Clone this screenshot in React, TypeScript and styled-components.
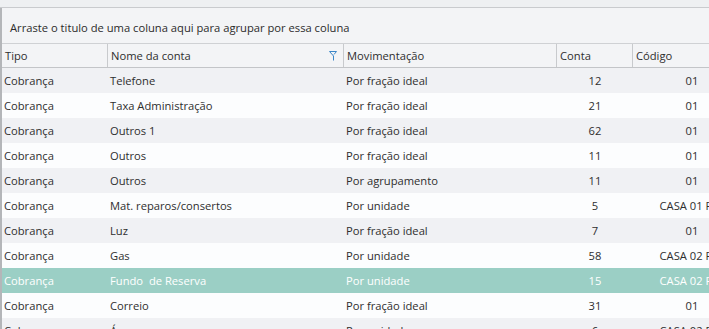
import React from 'react';
import styled, { createGlobalStyle } from 'styled-components';

type Row = {
  tipo: string;
  nome: string;
  mov: string;
  conta: string;
  codigo: string;
  selected?: boolean;
};

const rows: Row[] = [
  { tipo: 'Cobrança', nome: 'Telefone', mov: 'Por fração ideal', conta: '12', codigo: '01' },
  { tipo: 'Cobrança', nome: 'Taxa Administração', mov: 'Por fração ideal', conta: '21', codigo: '01' },
  { tipo: 'Cobrança', nome: 'Outros 1', mov: 'Por fração ideal', conta: '62', codigo: '01' },
  { tipo: 'Cobrança', nome: 'Outros', mov: 'Por fração ideal', conta: '11', codigo: '01' },
  { tipo: 'Cobrança', nome: 'Outros', mov: 'Por agrupamento', conta: '11', codigo: '01' },
  { tipo: 'Cobrança', nome: 'Mat. reparos/consertos', mov: 'Por unidade', conta: '5', codigo: 'CASA 01 FRE' },
  { tipo: 'Cobrança', nome: 'Luz', mov: 'Por fração ideal', conta: '7', codigo: '01' },
  { tipo: 'Cobrança', nome: 'Gas', mov: 'Por unidade', conta: '58', codigo: 'CASA 02 FRE' },
  { tipo: 'Cobrança', nome: 'Fundo  de Reserva', mov: 'Por unidade', conta: '15', codigo: 'CASA 02 FRE', selected: true },
  { tipo: 'Cobrança', nome: 'Correio', mov: 'Por fração ideal', conta: '31', codigo: '01' },
  { tipo: 'Cobrança', nome: 'Água', mov: 'Por unidade', conta: '6', codigo: 'CASA 02 FRE' },
];

const COLS = '106px 236px 213px 76px 118px';

const GlobalStyle = createGlobalStyle`
  html, body {
    margin: 0;
    padding: 0;
    overflow: hidden;
    background: #fcfdfe;
  }
  body {
    font-family: "Open Sans", "Segoe UI", sans-serif;
    font-size: 11.2px;
    color: #2e2e2e;
  }
`;

const Page = styled.div`
  width: 760px;
  display: flex;
  flex-direction: column;
`;

const TopBar = styled.div`
  height: 7px;
  background: #eef0f2;
  border-bottom: 1px solid #c9cbce;
`;

const Grid = styled.div`
  display: flex;
  flex-direction: column;
  border-left: 2px solid #b4b6b9;
`;

const GroupPanel = styled.div`
  height: 36px;
  background: #f3f4f6;
  border-bottom: 1px solid #cfd1d4;
  display: flex;
  align-items: center;
  padding: 3px 0 0 8px;
  box-sizing: border-box;
  color: #2b2b2b;
`;

const HeaderRow = styled.div`
  display: grid;
  grid-template-columns: ${COLS};
  height: 23px;
  background: #f3f4f6;
  border-bottom: 1px solid #c3c5c8;
`;

const HeaderCell = styled.div`
  display: flex;
  align-items: center;
  justify-content: space-between;
  padding: 0 6px 0 3px;
  border-right: 1px solid #c8cacd;
  white-space: nowrap;
  overflow: hidden;
`;

const DataRow = styled.div<{ $alt: boolean; $selected?: boolean }>`
  display: grid;
  grid-template-columns: ${COLS};
  height: 25px;
  align-items: center;
  background: ${(p) => (p.$selected ? '#9bcfc5' : p.$alt ? '#f0f1f4' : '#fcfdfe')};
  color: ${(p) => (p.$selected ? '#ffffff' : '#2e2e2e')};
`;

const Cell = styled.div<{ $align?: 'left' | 'center' }>`
  padding: 0 2px;
  text-align: ${(p) => p.$align ?? 'left'};
  white-space: pre;
  overflow: hidden;
`;

const CodeCell = styled.div`
  display: flex;
  justify-content: center;
  white-space: pre;
`;

const FilterIcon = () => (
  <svg width="8" height="10" viewBox="0 0 8 10" fill="none">
    <path
      d="M0.5 0.5 H7.5 M0.5 0.5 L4.5 5 V9.5 M7.5 0.5 L5 3.5"
      stroke="#3a86c8"
      strokeWidth="1"
    />
  </svg>
);

export default function App() {
  return (
    <Page>
      <GlobalStyle />
      <TopBar />
      <Grid>
        <GroupPanel>Arraste o titulo de uma coluna aqui para agrupar por essa coluna</GroupPanel>
        <HeaderRow>
          <HeaderCell>Tipo</HeaderCell>
          <HeaderCell>
            Nome da conta
            <FilterIcon />
          </HeaderCell>
          <HeaderCell>Movimentação</HeaderCell>
          <HeaderCell>Conta</HeaderCell>
          <HeaderCell>Código</HeaderCell>
        </HeaderRow>
        {rows.map((r, i) => (
          <DataRow key={i} $alt={i % 2 === 0} $selected={r.selected}>
            <Cell>{r.tipo}</Cell>
            <Cell>{r.nome}</Cell>
            <Cell>{r.mov}</Cell>
            <Cell $align="center">{r.conta}</Cell>
            <CodeCell>{r.codigo}</CodeCell>
          </DataRow>
        ))}
      </Grid>
    </Page>
  );
}
